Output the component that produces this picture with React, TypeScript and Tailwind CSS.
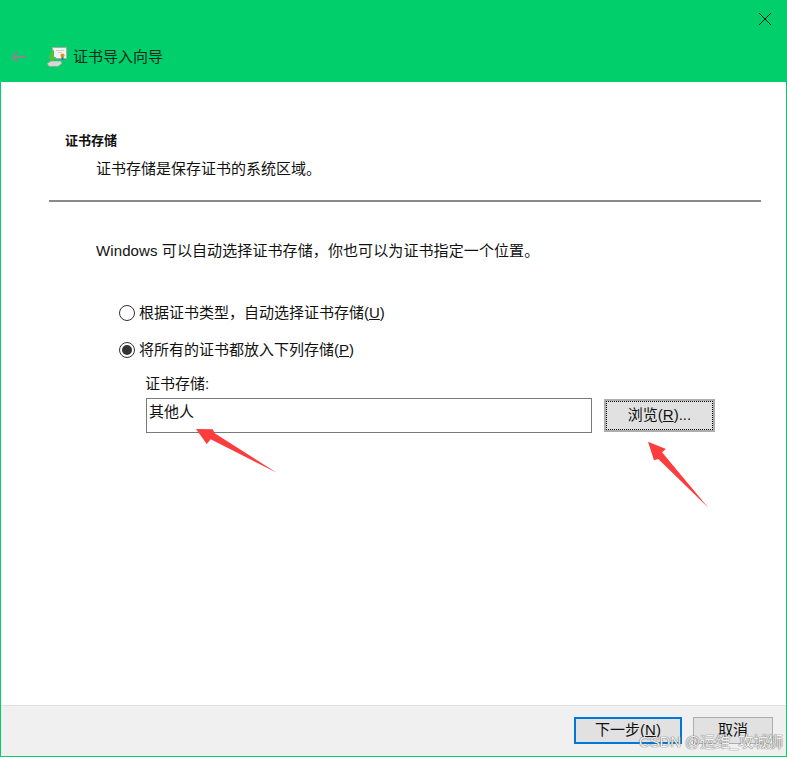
const FONT = "font-['Liberation_Sans','Noto_Sans_CJK_SC',sans-serif]";

function CertIcon() {
  return (
    <svg width="20" height="20" viewBox="0 0 20 20">
      <rect x="5.5" y="0.5" width="14" height="11" fill="#f2f2ee" stroke="#a9aca6" />
      <path d="M9 3.5h8M11 5.5h4" stroke="#cfd2cc" />
      <circle cx="15.5" cy="8.5" r="2" fill="#d9971a" />
      <path d="M14.5 10h2v3h-2z" fill="#3f6fb0" />
      <path d="M7 3v7h2.5L5 15 0.5 10H3V5z" fill="#4fbf3f" />
      <path d="M0 16.5 4 14h10l1 2.5-4 3H2z" fill="#d4d8d2" stroke="#8e948c" strokeWidth="0.6" />
    </svg>
  );
}

function Radio({ checked }: { checked?: boolean }) {
  return (
    <span className="flex h-[16px] w-[16px] shrink-0 items-center justify-center rounded-full border border-[#333] bg-white">
      {checked && <span className="h-[10px] w-[10px] rounded-full bg-[#333]" />}
    </span>
  );
}

function Arrow({ className, points }: { className: string; points: string }) {
  return (
    <svg className={`absolute ${className}`} width="100" height="100" viewBox="0 0 100 100">
      <polygon points={points} fill="#fb3d3d" />
    </svg>
  );
}

export default function App() {
  return (
    <div className={`${FONT} relative flex h-[757px] w-[787px] flex-col overflow-hidden border-x border-b border-[#00cf6c] bg-white text-[#111]`}>
      {/* Title bar */}
      <div className="flex h-[82px] shrink-0 flex-col bg-[#00cf6c]">
        <div className="flex justify-end pr-[15px] pt-[13px]">
          <svg width="12" height="12" viewBox="0 0 12 12">
            <path d="M0 0l12 12M12 0L0 12" stroke="#0b1a12" strokeWidth="1" />
          </svg>
        </div>
        <div className="mt-[22px] flex items-center">
          <svg className="ml-[10px]" width="16" height="12" viewBox="0 0 16 12">
            <path d="M15.5 6H1.5M6.5 1l-5 5 5 5" fill="none" stroke="#7f8d88" strokeWidth="2" />
          </svg>
          <span className="ml-[20px]"><CertIcon /></span>
          <span className="ml-[6px] text-[15px] leading-[20px] text-[#0c2c1c]">证书导入向导</span>
        </div>
      </div>

      {/* Content */}
      <div className="flex-1 pt-[49px]">
        <div className="pl-[64px] text-[13px] font-bold leading-[20px]">证书存储</div>
        <div className="mt-[8px] pl-[95px] text-[15px] leading-[20px]">证书存储是保存证书的系统区域。</div>
        <div className="ml-[48px] mr-[25px] mt-[21px] h-[2px] bg-[#8a8a8a]" />

        <div className="mt-[38px] pl-[95px] text-[15px] leading-[22px] tracking-[0.1px]">Windows 可以自动选择证书存储，你也可以为证书指定一个位置。</div>

        <div className="mt-[40px] flex items-center gap-[4px] pl-[118px] text-[15px] leading-[22px]">
          <Radio />
          <span>根据证书类型，自动选择证书存储(<u>U</u>)</span>
        </div>
        <div className="mt-[15px] flex items-center gap-[4px] pl-[118px] text-[15px] leading-[22px]">
          <Radio checked />
          <span>将所有的证书都放入下列存储(<u>P</u>)</span>
        </div>

        <div className="mt-[13px] pl-[144px] text-[15px] leading-[20px]">证书存储:</div>
        <div className="mt-[4px] flex items-center pl-[145px]">
          <div className="h-[35px] w-[446px] border border-[#7a7a7a] px-[3px] pt-[3px] text-[15px] leading-[20px] indent-[-1px]">其他人</div>
          <div className="ml-[12px] flex h-[33px] w-[111px] items-center justify-center border-2 border-[#adadad] bg-[#e1e1e1] outline-1 -outline-offset-3 outline-dotted outline-black text-[15px]">
            <span>浏览(<u>R</u>)...</span>
          </div>
        </div>
      </div>

      {/* Footer */}
      <div className="flex h-[51px] shrink-0 items-start justify-end border-t border-[#dfdfdf] bg-[#f0f0f0] pr-[13px] pt-[11px]">
        <div className="flex h-[27px] w-[108px] items-center justify-center border-2 border-[#0078d7] bg-[#e1e1e1] text-[15px]">
          <span>下一步(<u>N</u>)</span>
        </div>
        <div className="ml-[11px] flex h-[27px] w-[80px] items-center justify-center border border-[#adadad] bg-[#e1e1e1] text-[15px]">
          取消
        </div>
      </div>

      {/* Annotation arrows */}
      <Arrow className="left-[185px] top-[420px]" points="10,9 26.7,9.3 28.7,13.3 90.7,52.7 24.7,19.3 20.7,24" />
      <Arrow className="left-[638px] top-[433px]" points="9,8.7 27,16 23,19.3 69.3,74.7 19.3,26 15,27.3" />

      {/* Watermark */}
      <div className="absolute bottom-[5px] right-[3px] text-[15px] leading-[18px] tracking-[-0.1px] text-[#f2f2f2] [text-shadow:0_0_1px_#555,0_0_1px_#777]">
        CSDN @运维_攻城狮
      </div>
    </div>
  );
}
